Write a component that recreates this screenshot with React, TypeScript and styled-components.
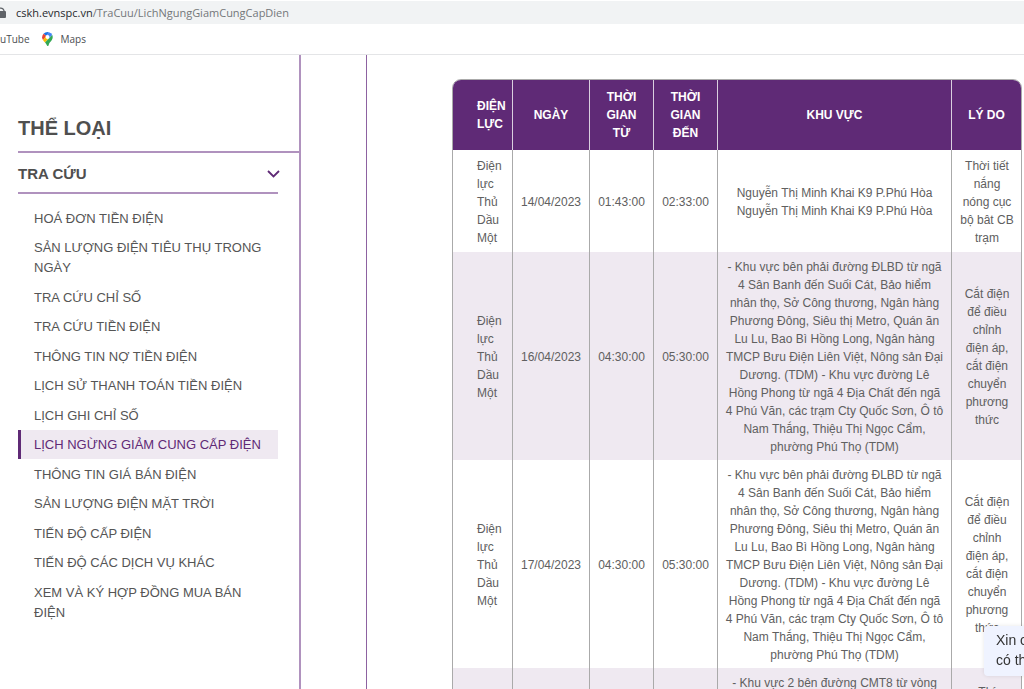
import React from "react";
import styled, { createGlobalStyle } from "styled-components";

const purple = "#5f2a76";
const rule = "#b092be";

const Global = createGlobalStyle`
  * { box-sizing: border-box; }
  body { margin: 0; background: #fff; font-family: "Liberation Sans", Arial, sans-serif; color: #555; }
`;

const Page = styled.div`
  display: flex;
  flex-direction: column;
  height: 100vh;
  overflow: hidden;
`;

const Browser = styled.header`
  flex: none;
  border-bottom: 1px solid #e4e5e7;
  font-family: "Open Sans", "Noto Sans", sans-serif;
  overflow: hidden;
`;

const AddressBar = styled.div`
  display: flex;
  align-items: center;
  gap: 9px;
  height: 24px;
  border-top: 1px solid #fff;
  background: #f1f3f4;
  font-size: 11px;
  line-height: 16px;
  color: #74777a;
`;

const Host = styled.span`
  color: #27292c;
`;

const Bookmarks = styled.nav`
  display: flex;
  align-items: center;
  gap: 12px;
  height: 30px;
`;

const Bookmark = styled.a`
  display: flex;
  align-items: center;
  gap: 8px;
  font-size: 10px;
  line-height: 16px;
  color: #4b4e52;
  text-decoration: none;
`;

const Body = styled.div`
  display: flex;
  flex: 1;
  min-height: 0;
`;

const Sidebar = styled.aside`
  flex: none;
  width: 301px;
  padding: 60px 0 0 18px;
  border-right: 2px solid ${rule};
`;

const SidebarTitle = styled.h2`
  margin: 0;
  padding-bottom: 10px;
  border-bottom: 2px solid ${rule};
  font-size: 20px;
  line-height: 26px;
  color: #4f4f4f;
`;

const Section = styled.section`
  margin-right: 21px;
`;

const SectionToggle = styled.button`
  display: flex;
  align-items: center;
  justify-content: space-between;
  width: 100%;
  height: 41px;
  padding: 2px 0 0;
  border: 0;
  border-bottom: 2px solid ${rule};
  background: none;
  font: bold 15px/20px "Liberation Sans", Arial, sans-serif;
  color: #4f4f4f;

  svg { margin-right: -2px; }
`;

const Menu = styled.ul`
  margin: 0;
  padding: 10px 0 0;
  list-style: none;
`;

const MenuItem = styled.li`
  &:nth-child(even) { padding-bottom: 1px; }
`;

const MenuLink = styled.a<{ $active?: boolean }>`
  display: block;
  padding: 5px 8px 4px 13px;
  border-left: 3px solid ${(p) => (p.$active ? purple : "transparent")};
  background: ${(p) => (p.$active ? "#efe9f1" : "none")};
  color: ${(p) => (p.$active ? purple : "#555")};
  font-size: 13px;
  line-height: 20px;
  text-decoration: none;
`;

const Main = styled.main`
  flex: 1;
  min-width: 0;
  margin-left: 65px;
  padding: 24px 2px 0 85px;
  border-left: 1px solid #8d62a1;
`;

const Schedule = styled.table`
  width: 100%;
  table-layout: fixed;
  border-collapse: separate;
  border-spacing: 0;
  border: 1px solid #aaa;
  border-radius: 9px;
  overflow: hidden;
  font-size: 12px;
  line-height: 18px;
  text-align: center;
`;

const Col = styled.col<{ $width?: number }>`
  width: ${(p) => (p.$width ? `${p.$width}px` : "auto")};
`;

const HeadCell = styled.th`
  height: 70px;
  padding: 5px 8px;
  border-right: 1px solid #d9cfdf;
  background: ${purple};
  color: #fff;
  &:first-child { padding-left: 24px; padding-right: 0; text-align: left; }
  &:last-child { border-right: 0; }
`;

const Row = styled.tr`
  &:nth-child(even) { background: #efe9f1; }
`;

const Cell = styled.td<{ $align?: string }>`
  height: 102px;
  padding: 6px 6px 4px;
  border-right: 1px solid #aaa;
  color: #606060;
  vertical-align: ${(p) => p.$align ?? "middle"};
  &:first-child { padding-left: 24px; text-align: left; }
  &:last-child {
    padding: ${(p) => (p.$align ? "15px" : "6px")} 7px 4px 8px;
    border-right: 0;
  }
`;

const ChatBubble = styled.div`
  position: fixed;
  right: -40px;
  bottom: 13px;
  width: 80px;
  padding: 4px 0 6px 12px;
  border-radius: 4px;
  background: #eff3ff;
  box-shadow: 0 0 4px #0000001a;
  font-size: 14px;
  line-height: 20px;
  color: #333;
  white-space: nowrap;
`;

const menu = [
  "HOÁ ĐƠN TIỀN ĐIỆN",
  "SẢN LƯỢNG ĐIỆN TIÊU THỤ TRONG NGÀY",
  "TRA CỨU CHỈ SỐ",
  "TRA CỨU TIỀN ĐIỆN",
  "THÔNG TIN NỢ TIỀN ĐIỆN",
  "LỊCH SỬ THANH TOÁN TIỀN ĐIỆN",
  "LỊCH GHI CHỈ SỐ",
  "LỊCH NGỪNG GIẢM CUNG CẤP ĐIỆN",
  "THÔNG TIN GIÁ BÁN ĐIỆN",
  "SẢN LƯỢNG ĐIỆN MẶT TRỜI",
  "TIẾN ĐỘ CẤP ĐIỆN",
  "TIẾN ĐỘ CÁC DỊCH VỤ KHÁC",
  "XEM VÀ KÝ HỢP ĐỒNG MUA BÁN ĐIỆN",
];

const headings = ["ĐIỆN LỰC", "NGÀY", "THỜI GIAN TỪ", "THỜI GIAN ĐẾN", "KHU VỰC", "LÝ DO"];

const longArea =
  "- Khu vực bên phải đường ĐLBD từ ngã 4 Sân Banh đến Suối Cát, Bảo hiểm nhân thọ, Sở Công thương, Ngân hàng Phương Đông, Siêu thị Metro, Quán ăn Lu Lu, Bao Bì Hồng Long, Ngân hàng TMCP Bưu Điện Liên Việt, Nông sản Đại Dương. (TDM) - Khu vực đường Lê Hồng Phong từ ngã 4 Địa Chất đến ngã 4 Phú Văn, các trạm Cty Quốc Sơn, Ô tô Nam Thắng, Thiệu Thị Ngọc Cẩm, phường Phú Thọ (TDM)";
const switching = "Cắt điện để điều chỉnh điện áp, cắt điện chuyển phương thức";
const unit = "Điện lực Thủ Dầu Một";

const rows = [
  {
    cells: [
      unit,
      "14/04/2023",
      "01:43:00",
      "02:33:00",
      "Nguyễn Thị Minh Khai K9 P.Phú Hòa Nguyễn Thị Minh Khai K9 P.Phú Hòa",
      "Thời tiết nắng nóng cục bộ bât CB trạm",
    ],
  },
  { cells: [unit, "16/04/2023", "04:30:00", "05:30:00", longArea, switching] },
  { cells: [unit, "17/04/2023", "04:30:00", "05:30:00", longArea, switching] },
  { cells: ["", "", "", "", "- Khu vực 2 bên đường CMT8 từ vòng", "Thí"], align: "top" },
];

const LockIcon = () => (
  <svg width="7" height="12" viewBox="0 0 7 12" aria-hidden="true">
    <path d="M0 4h5q1 0 1 1v5q0 1-1 1H0z" fill="#5f6368" />
    <path d="M0 1.200Q4 .8 4.200 5" fill="none" stroke="#5f6368" strokeWidth="1.300" />
  </svg>
);

const PinIcon = () => (
  <svg width="11" height="14" viewBox="0 0 22 28" aria-hidden="true">
    <path d="M11 0a10.500 10.500 0 0 0-8 3.700L8 8l6-7.500Q12.500 0 11 0z" fill="#1a73e8" />
    <path d="M3 3.700A10.500 10.500 0 0 0 2 16L8.500 9 8 7.500z" fill="#ea4335" />
    <path d="M14 .5q4.500 1.500 6.500 5.500L13 14 8 8z" fill="#4285f4" />
    <path d="M2 16q1.500 2.500 4 5L14 12 8 8z" fill="#fbbc04" />
    <path d="M20.500 6c2.500 6-.5 10-4 14-2 2.300-2.500 4-3.500 7q-1.500 2-3 0C9 24.500 8 23 6 21z" fill="#34a853" />
    <circle cx="11" cy="10" r="4" fill="#fff" />
  </svg>
);

const ChevronIcon = () => (
  <svg width="13" height="8" viewBox="0 0 13 8" aria-hidden="true">
    <path d="M1 1l5.500 5.500L12 1" fill="none" stroke={purple} strokeWidth="1.800" />
  </svg>
);

export default function App() {
  return (
    <Page>
      <Global />
      <Browser>
        <AddressBar>
          <LockIcon />
          <span>
            <Host>cskh.evnspc.vn</Host>/TraCuu/LichNgungGiamCungCapDien
          </span>
        </AddressBar>
        <Bookmarks>
          <Bookmark href="#youtube">uTube</Bookmark>
          <Bookmark href="#maps">
            <PinIcon />
            Maps
          </Bookmark>
        </Bookmarks>
      </Browser>
      <Body>
        <Sidebar>
          <SidebarTitle>THỂ LOẠI</SidebarTitle>
          <Section>
            <SectionToggle type="button" aria-expanded="true">
              TRA CỨU
              <ChevronIcon />
            </SectionToggle>
            <Menu>
              {menu.map((label, i) => (
                <MenuItem key={label}>
                  <MenuLink href="#menu" $active={i === 7}>
                    {label}
                  </MenuLink>
                </MenuItem>
              ))}
            </Menu>
          </Section>
        </Sidebar>
        <Main>
          <Schedule>
            <colgroup>
              <Col $width={60} />
              <Col $width={77} />
              <Col $width={64} />
              <Col $width={64} />
              <Col />
              <Col $width={69} />
            </colgroup>
            <thead>
              <tr>
                {headings.map((h) => (
                  <HeadCell key={h} scope="col">
                    {h}
                  </HeadCell>
                ))}
              </tr>
            </thead>
            <tbody>
              {rows.map((row, i) => (
                <Row key={i}>
                  {row.cells.map((text, j) => (
                    <Cell key={j} $align={row.align}>
                      {text}
                    </Cell>
                  ))}
                </Row>
              ))}
            </tbody>
          </Schedule>
        </Main>
      </Body>
      <ChatBubble>
        Xin c
        <br />
        có th
      </ChatBubble>
    </Page>
  );
}
